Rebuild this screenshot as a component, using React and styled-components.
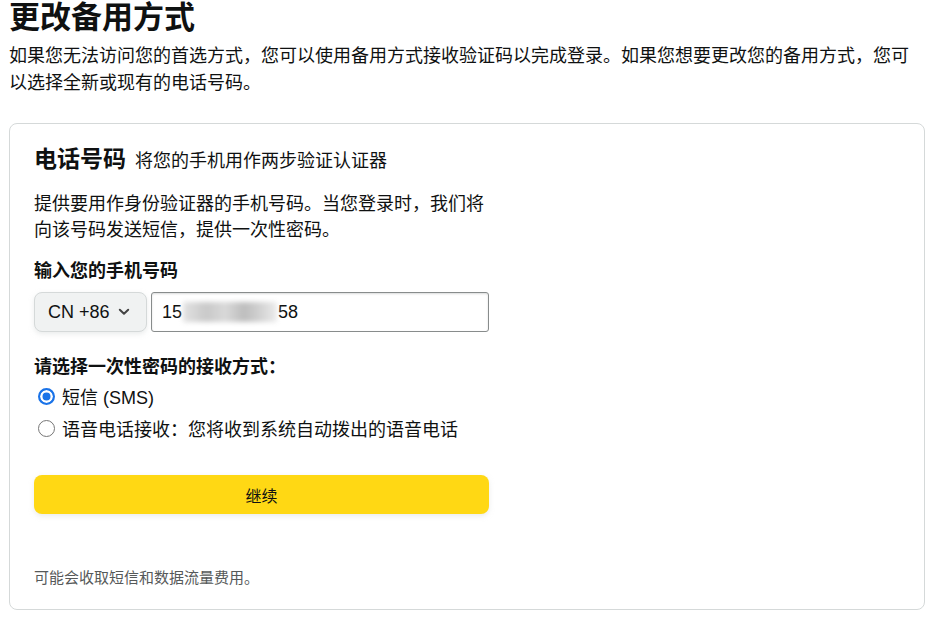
import React from "react";
import styled, { createGlobalStyle } from "styled-components";

const Global = createGlobalStyle`
  html, body { margin: 0; padding: 0; background: #fff; }
  body {
    font-family: "Liberation Sans", Arial, "Noto Sans CJK SC", sans-serif;
    color: #0f1111;
  }
  * { box-sizing: border-box; }
`;

const Page = styled.div`
  padding: 0 11px 0 9px;
  width: 936px;
`;

const Title = styled.h1`
  margin: 0;
  font-size: 31px;
  line-height: 36px;
  font-weight: 700;
`;

const Intro = styled.p`
  margin: 7px 0 0;
  font-size: 18px;
  line-height: 27px;
`;

const Card = styled.section`
  margin-top: 26px;
  border: 1px solid #d5d9d9;
  border-radius: 8px;
  padding: 20px 24px 21px;
  height: 487px;
  display: flex;
  flex-direction: column;
`;

const Column = styled.div`
  width: 455px;
  display: flex;
  flex-direction: column;
  flex: 1;
`;

const CardHead = styled.div`
  display: flex;
  align-items: baseline;
  gap: 9px;
  line-height: 30px;
`;

const CardTitle = styled.h2`
  margin: 0;
  font-size: 23px;
  font-weight: 700;
`;

const CardSub = styled.span`
  font-size: 18px;
`;

const Body = styled.p`
  margin: 15px 0 0;
  font-size: 18px;
  line-height: 26px;
`;

const Label = styled.div`
  margin-top: ${(p) => p.$top}px;
  font-size: 18px;
  line-height: 26px;
  font-weight: 700;
`;

const PhoneRow = styled.div`
  margin-top: 8px;
  display: flex;
  gap: 4px;
  height: 40px;
`;

const CountrySelect = styled.div`
  width: 113px;
  background: #f0f2f2;
  border: 1px solid #d5d9d9;
  border-radius: 8px;
  box-shadow: 0 2px 5px rgba(213, 217, 217, 0.5);
  display: flex;
  align-items: center;
  padding: 0 0 0 13px;
  gap: 8px;
  font-size: 18px;
`;

const PhoneInput = styled.div`
  flex: 1;
  border: 1px solid #888c8c;
  border-radius: 3px;
  box-shadow: 0 1px 2px rgba(15, 17, 17, 0.15) inset;
  display: flex;
  align-items: center;
  padding: 0 10px;
  font-size: 18px;
`;

const Redacted = styled.span`
  display: inline-block;
  width: 94px;
  height: 20px;
  margin: 0 1px;
  background: linear-gradient(90deg, #e2e2e2 0%, #c9c9c9 25%, #d9d9d9 45%, #bdbdbd 65%, #d6d6d6 85%, #ececec 100%);
  filter: blur(2.5px);
`;

const Options = styled.div`
  display: flex;
  flex-direction: column;
`;

const Option = styled.label`
  display: flex;
  align-items: center;
  height: 32px;
  gap: 7px;
  padding-left: 4px;
  font-size: 18px;
`;

const Radio = styled.span`
  width: 17px;
  height: 17px;
  border-radius: 50%;
  flex: none;
  border: ${(p) => (p.$checked ? "2px solid #1a73e8" : "1px solid #767676")};
  background: ${(p) => (p.$checked ? "#1a73e8" : "#fff")};
  box-shadow: ${(p) => (p.$checked ? "inset 0 0 0 2.5px #fff" : "none")};
`;

const Button = styled.button`
  margin-top: 31px;
  height: 39px;
  width: 100%;
  border: none;
  border-radius: 8px;
  background: #ffd814;
  box-shadow: 0 2px 5px rgba(213, 217, 217, 0.5);
  font-family: inherit;
  font-size: 16px;
  color: #0f1111;
  cursor: pointer;
`;

const Footer = styled.p`
  margin: auto 0 0;
  font-size: 15px;
  line-height: 20px;
  color: #565959;
`;

const Chevron = () => (
  <svg width="12" height="8" viewBox="0 0 12 8" fill="none">
    <path d="M1.8 1.8 L6 5.8 L10.2 1.8" stroke="#444" strokeWidth="2" strokeLinecap="round" strokeLinejoin="round" />
  </svg>
);

export default function App() {
  return (
    <Page>
      <Global />
      <Title>更改备用方式</Title>
      <Intro>
        如果您无法访问您的首选方式，您可以使用备用方式接收验证码以完成登录。如果您想要更改您的备用方式，您可以选择全新或现有的电话号码。
      </Intro>
      <Card>
        <Column>
          <CardHead>
            <CardTitle>电话号码</CardTitle>
            <CardSub>将您的手机用作两步验证认证器</CardSub>
          </CardHead>
          <Body>提供要用作身份验证器的手机号码。当您登录时，我们将向该号码发送短信，提供一次性密码。</Body>
          <Label $top={15}>输入您的手机号码</Label>
          <PhoneRow>
            <CountrySelect>
              CN +86 <Chevron />
            </CountrySelect>
            <PhoneInput>
              15<Redacted />58
            </PhoneInput>
          </PhoneRow>
          <Label $top={22}>请选择一次性密码的接收方式：</Label>
          <Options>
            <Option>
              <Radio $checked />
              短信 (SMS)
            </Option>
            <Option>
              <Radio />
              语音电话接收：您将收到系统自动拨出的语音电话
            </Option>
          </Options>
          <Button>继续</Button>
          <Footer>可能会收取短信和数据流量费用。</Footer>
        </Column>
      </Card>
    </Page>
  );
}
